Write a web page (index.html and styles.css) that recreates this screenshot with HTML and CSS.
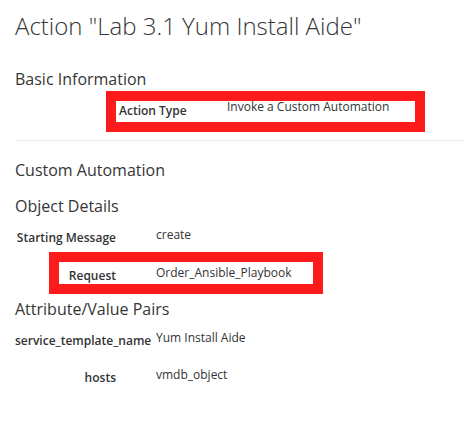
FILE: index.html
```html
<!DOCTYPE html>
<html>
<head>
<meta charset="utf-8">
<link rel="stylesheet" href="styles.css">
</head>
<body>
<div class="page">
  <h1 class="title">Action "Lab 3.1 Yum Install Aide"</h1>
  <h2 class="section basic">Basic Information</h2>
  <div class="mark mark-type">
    <div class="row-type">
      <span class="label type-label">Action Type</span>
      <span class="value type-value">Invoke a Custom Automation</span>
    </div>
  </div>
  <div class="divider"></div>
  <h2 class="section custom">Custom Automation</h2>
  <h2 class="section object">Object Details</h2>
  <div class="row row-start">
    <span class="label col-label">Starting Message</span>
    <span class="value">create</span>
  </div>
  <div class="mark mark-request">
    <div class="row row-request">
      <span class="label req-label">Request</span>
      <span class="value">Order_Ansible_Playbook</span>
    </div>
  </div>
  <h2 class="section attrs">Attribute/Value Pairs</h2>
  <div class="row row-service">
    <span class="label col-label">service_template_name</span>
    <span class="value">Yum Install Aide</span>
  </div>
  <div class="row row-hosts">
    <span class="label col-label">hosts</span>
    <span class="value">vmdb_object</span>
  </div>
</div>
</body>
</html>
```

FILE: styles.css
```css
html, body {
  margin: 0;
  padding: 0;
  background: #fff;
}
body {
  font-family: "Open Sans", "Liberation Sans", sans-serif;
  color: #333;
}
.page {
  padding: 0 0 0 15px;
}
.title {
  margin: 12px 0 0;
  font-size: 24px;
  line-height: 28px;
  font-weight: 300;
  color: #363636;
}
.section {
  margin: 0;
  font-size: 16px;
  line-height: 20px;
  font-weight: 400;
  color: #363636;
}
.basic { margin-top: 29px; }
.custom { margin-top: 19px; }
.object { margin-top: 16px; }
.attrs { margin-top: 5px; }

.label {
  font-size: 12px;
  line-height: 12px;
  font-weight: 600;
  white-space: nowrap;
}
.value {
  font-size: 12px;
  line-height: 12px;
  font-weight: 400;
  white-space: nowrap;
}

.mark {
  border: 10px solid #fd1a1a;
  background: #fff;
}
.mark-type {
  margin: 2px 0 0 91px;
  width: 299px;
  height: 21px;
}
.row-type {
  display: flex;
  align-items: flex-start;
}
.type-label {
  width: 108px;
  padding: 4px 0 0 3px;
}

.divider {
  margin-top: 8px;
  border-top: 1px solid #eaeaea;
}

.row {
  display: flex;
  align-items: flex-start;
}
.row .label {
  padding-top: 3px;
}
.col-label {
  width: 101px;
  text-align: right;
  margin-right: 40px;
}
.row-start { margin-top: 13px; }
.mark-request {
  margin: 8px 0 0 34px;
  width: 254px;
  height: 22px;
}
.row-request { padding-top: 5px; }
.req-label {
  width: 57px;
  text-align: right;
  margin-right: 40px;
}
.row-service { margin-top: 13px; }
.row-hosts { margin-top: 22px; }
```
